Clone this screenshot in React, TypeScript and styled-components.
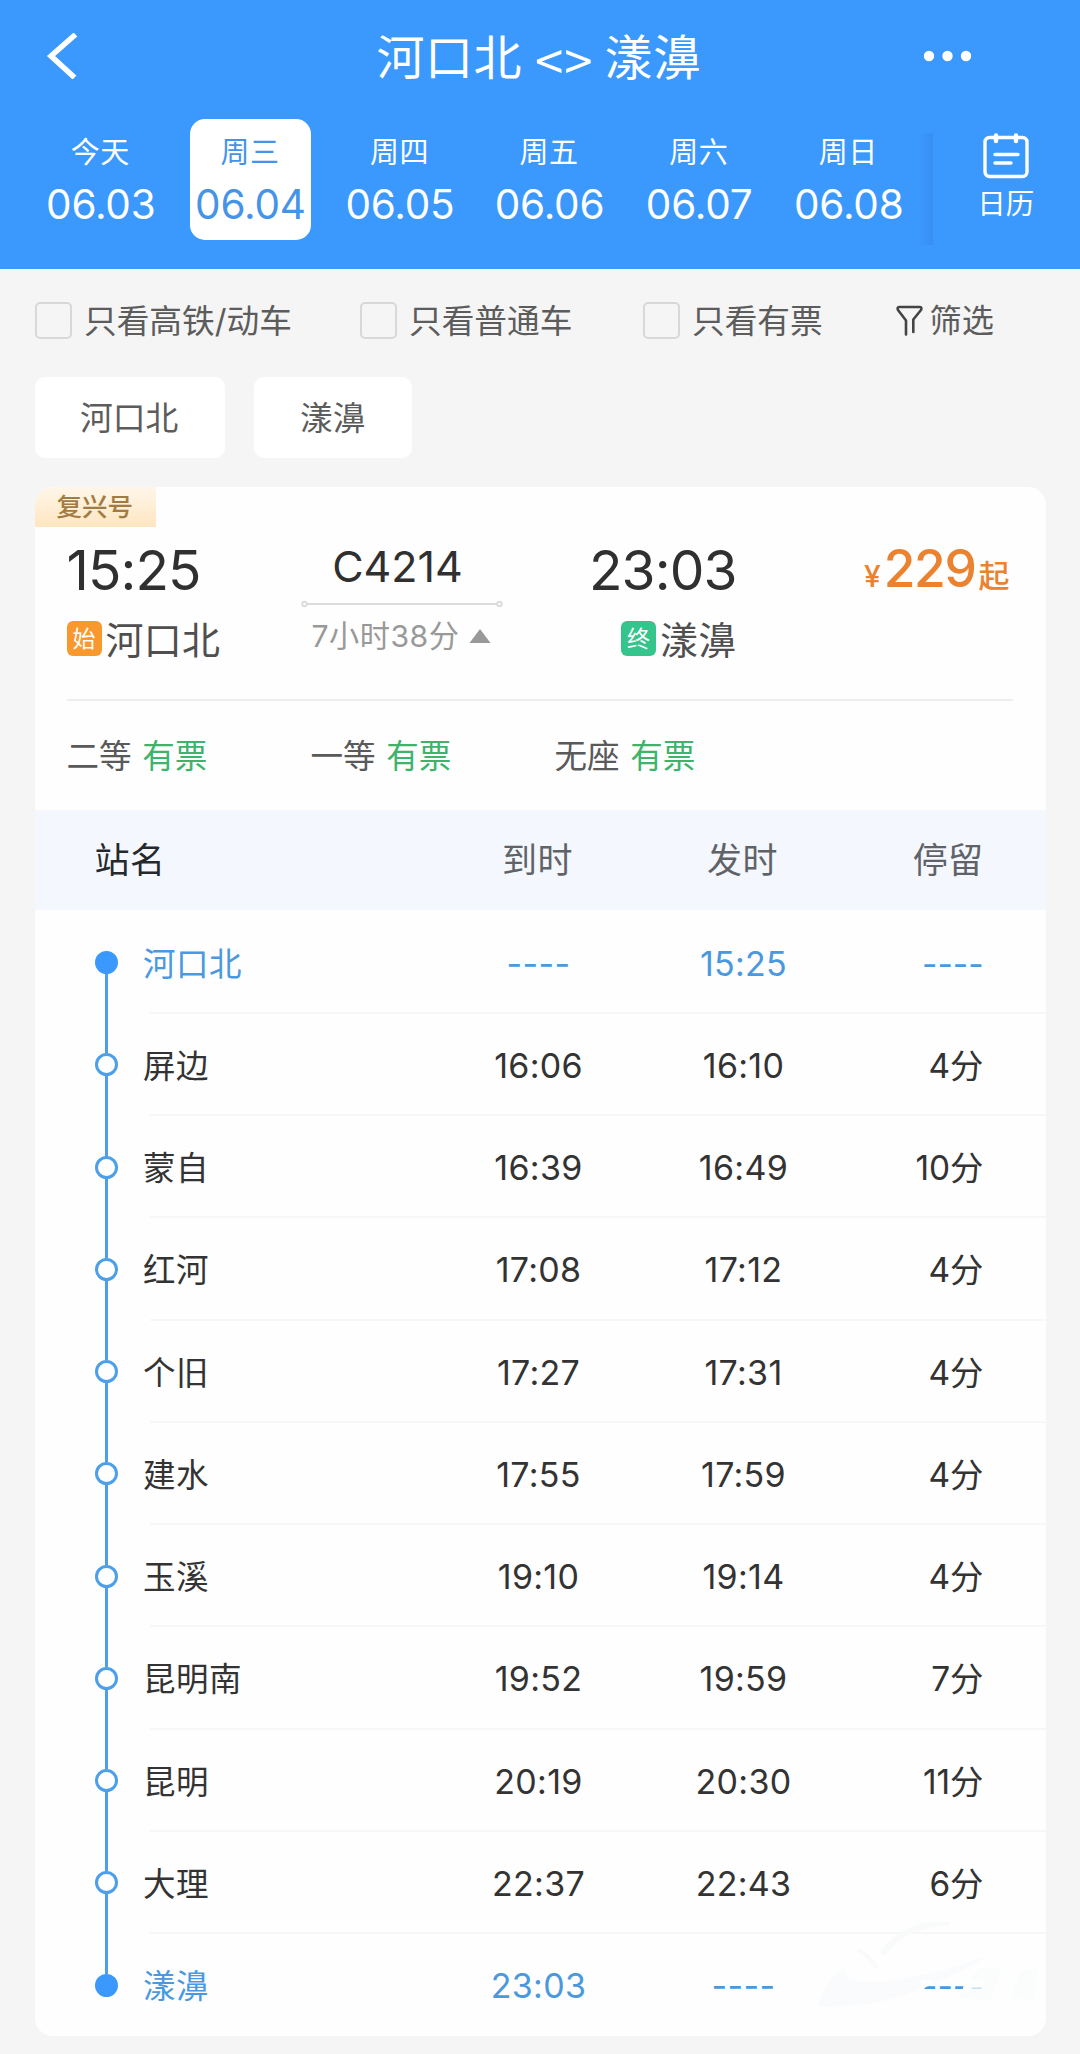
import React from "react";
import styled, { createGlobalStyle, css } from "styled-components";

const BLUE = "#3b98fc";
const LINK = "#4a99de";

const GlobalStyle = createGlobalStyle`
  * { box-sizing: border-box; }
  body {
    margin: 0;
    background: #f5f5f5;
    font-family: Inter, "Noto Sans CJK SC", sans-serif;
    color: #333;
  }
`;

const Page = styled.div`
  width: 1080px;
  height: 2054px;
  overflow: hidden;
  background: #f5f5f5;
`;

/* Header */
const Header = styled.header`
  height: 269px;
  background: ${BLUE};
  color: #fff;
`;

const TitleBar = styled.div`
  height: 119px;
  padding: 0 108px 8px 46px;
  display: grid;
  grid-template-columns: 230px 1fr 170px;
  align-items: center;
`;

const Title = styled.h1`
  margin: 0;
  padding-top: 4px;
  font-size: 48px;
  line-height: 60px;
  font-weight: 400;
  letter-spacing: 0.5px;
  text-align: center;
  white-space: nowrap;
  display: flex;
  justify-content: center;
  gap: 13px;
`;

const Swap = styled.span`
  font-family: "Noto Sans CJK SC", sans-serif;
  font-size: 51px;
  letter-spacing: 1px;
  margin-right: -2px;
`;

const DotsIcon = styled.svg`
  justify-self: end;
`;

const DateBar = styled.div`
  display: flex;
  padding-left: 26px;
`;

const Day = styled.div`
  width: 149.6px;
  display: flex;
  justify-content: center;
`;

const DayTile = styled.div<{ $active?: boolean }>`
  width: 121px;
  height: 121px;
  padding-top: 12px;
  border-radius: 15px;
  display: flex;
  flex-direction: column;
  align-items: center;
  ${(p) => p.$active && css`background: #fff; color: #4594e8;`}
`;

const Weekday = styled.span`
  font-size: 29px;
  line-height: 44px;
  letter-spacing: 0.5px;
  margin-right: 1px;
`;

const DateText = styled.span`
  font-size: 40.5px;
  line-height: 60px;
  letter-spacing: -0.2px;
`;

const DateShade = styled.div`
  width: 13px;
  height: 112px;
  margin: 14px 0 0 -4px;
  background: linear-gradient(to right, rgba(50, 120, 215, 0), rgba(50, 120, 215, 0.28));
`;

const Calendar = styled.div`
  flex: 1;
  padding: 14px 1px 0 0;
  display: flex;
  flex-direction: column;
  align-items: center;
`;

const CalendarLabel = styled.span`
  font-size: 28.5px;
  line-height: 36px;
  margin-top: 7px;
`;

/* Filters */
const Filters = styled.div`
  height: 108px;
  padding: 0 0 5px 34.5px;
  display: flex;
  align-items: center;
`;

const FilterOption = styled.label<{ $width: number }>`
  width: ${(p) => p.$width}px;
  display: flex;
  align-items: center;
  gap: 12.5px;
  font-size: 32.7px;
  line-height: 40px;
  color: #5c5c5c;
  white-space: nowrap;
`;

const Box = styled.span`
  width: 37px;
  height: 37px;
  border: 2.5px solid #d8d8d8;
  border-radius: 5px;
`;

const FilterButton = styled(FilterOption)`
  gap: 7px;
  font-size: 32.2px;
`;

const Chips = styled.div`
  display: flex;
  gap: 29px;
  padding-left: 34.5px;
  height: 110px;
`;

const Chip = styled.div`
  height: 81px;
  padding: 0 47px 0 45.5px;
  border-radius: 10px;
  background: #fff;
  font-size: 32.8px;
  line-height: 82px;
  color: #5c5c5c;
`;

/* Card */
const Card = styled.section`
  position: relative;
  width: 1011px;
  height: 1549px;
  margin-left: 34.5px;
  border-radius: 18px;
  background: #fefefe;
  overflow: hidden;
`;

const TrainType = styled.div`
  width: 121px;
  height: 40px;
  padding-left: 22px;
  background: linear-gradient(#fff6ea, #fee6c0);
  color: #a17c42;
  font-size: 25.5px;
  font-weight: 500;
  line-height: 39px;
`;

const Summary = styled.div`
  height: 174px;
  margin: 0 33px 0 32px;
  border-bottom: 2px solid #eee;
  display: grid;
  grid-template-columns: 234px 202px 234px 1fr;
`;

const Endpoint = styled.div<{ $end?: boolean }>`
  display: flex;
  flex-direction: column;
  align-items: ${(p) => (p.$end ? "flex-end" : "flex-start")};
`;

const Clock = styled.div`
  margin-top: 15px;
  font-size: 55px;
  line-height: 56px;
  letter-spacing: -0.9px;
  color: #303030;
`;

const Station = styled.div`
  display: flex;
  align-items: center;
  gap: 4px;
  margin-top: 20px;
  font-size: 38px;
  line-height: 44px;
  letter-spacing: 0.3px;
  color: #4f4f4f;
`;

const Mark = styled.span<{ $color: string }>`
  width: 35px;
  height: 35px;
  margin-top: -3px;
  border-radius: 6px;
  background: ${(p) => p.$color};
  color: #fff;
  font-size: 23px;
  line-height: 36px;
  letter-spacing: 0;
  text-align: center;
`;

const Trip = styled.div`
  display: flex;
  flex-direction: column;
  align-items: center;
`;

const TrainNo = styled.div`
  margin-top: 14px;
  padding-right: 8px;
  font-size: 43px;
  line-height: 50px;
  color: #303030;
`;

const Track = styled.svg`
  display: block;
  margin-top: 8px;
`;

const Duration = styled.div`
  display: flex;
  align-items: center;
  gap: 10px;
  margin-top: 7px;
  font-size: 30.2px;
  line-height: 40px;
  letter-spacing: 0.5px;
  color: #999;
`;

const Price = styled.div`
  display: flex;
  justify-content: flex-end;
  align-items: baseline;
  padding-right: 3px;
  height: 60px;
  margin-top: 11px;
  color: #ea822f;
  line-height: 60px;
  font-weight: 500;
`;

const Yen = styled.span`
  font-size: 30px;
  margin-right: 3px;
`;

const Amount = styled.span`
  font-size: 51.5px;
  letter-spacing: -1.4px;
`;

const From = styled.span`
  font-size: 31px;
  margin-left: 3px;
`;

const Seats = styled.div`
  height: 109px;
  padding: 1px 0 0 32px;
  display: flex;
  align-items: center;
`;

const Seat = styled.div`
  width: 244px;
  display: flex;
  gap: 10.5px;
  font-size: 32.6px;
  line-height: 40px;
  color: #5a5a5a;
`;

const Available = styled.span`
  color: #3fb36c;
`;

/* Timetable */
const TableHead = styled.div`
  height: 100px;
  padding: 0 62px 0 60px;
  background: #f4f8fe;
  display: grid;
  grid-template-columns: 341px 204px 206px 1fr;
  align-items: center;
  font-size: 35px;
  line-height: 44px;
  letter-spacing: 0.4px;
  color: #5f6368;
`;

const HeadCell = styled.span<{ $align?: string; $strong?: boolean }>`
  text-align: ${(p) => p.$align || "left"};
  ${(p) => p.$strong && css`color: #26292c;`}
`;

const Stops = styled.div`
  padding-top: 1.5px;
`;

const StopRow = styled.div`
  height: 102.25px;
  padding-left: 60px;
  display: flex;
`;

const Rail = styled.div`
  width: 23px;
  display: flex;
  flex-direction: column;
  align-items: center;
`;

const RailLine = styled.div<{ $hidden?: boolean }>`
  flex: 1;
  width: 3px;
  background: ${(p) => (p.$hidden ? "transparent" : "#4c9fe8")};
`;

const RailDot = styled.div<{ $solid: boolean }>`
  width: 23px;
  height: 23px;
  border-radius: 50%;
  border: 3px solid ${(p) => (p.$solid ? BLUE : "#4c9fe8")};
  background: ${(p) => (p.$solid ? BLUE : "#fff")};
`;

const StopBody = styled.div<{ $accent: boolean; $last: boolean }>`
  flex: 1;
  margin-left: 32px;
  padding: 6px 62px 0 0;
  display: grid;
  grid-template-columns: 287px 204px 206px 1fr;
  align-items: center;
  border-bottom: 2px solid ${(p) => (p.$last ? "transparent" : "#f7f7f7")};
  line-height: 44px;
  color: ${(p) => (p.$accent ? LINK : "#333")};
`;

const StopName = styled.span`
  margin-left: -6.5px;
  font-size: 32.5px;
  letter-spacing: 0.5px;
`;

const Time = styled.span`
  padding-bottom: 2px;
  font-size: 34px;
  letter-spacing: 0.3px;
  text-align: center;
`;

const Stay = styled.span`
  padding-bottom: 2px;
  font-size: 33.4px;
  text-align: right;
  white-space: nowrap;
`;

const Watermark = styled.svg`
  position: absolute;
  right: 0;
  bottom: 14px;
`;

const days = [
  ["今天", "06.03"],
  ["周三", "06.04"],
  ["周四", "06.05"],
  ["周五", "06.06"],
  ["周六", "06.07"],
  ["周日", "06.08"],
];

const seats = ["二等", "一等", "无座"];

const stops = [
  ["河口北", "----", "15:25", "----"],
  ["屏边", "16:06", "16:10", "4分"],
  ["蒙自", "16:39", "16:49", "10分"],
  ["红河", "17:08", "17:12", "4分"],
  ["个旧", "17:27", "17:31", "4分"],
  ["建水", "17:55", "17:59", "4分"],
  ["玉溪", "19:10", "19:14", "4分"],
  ["昆明南", "19:52", "19:59", "7分"],
  ["昆明", "20:19", "20:30", "11分"],
  ["大理", "22:37", "22:43", "6分"],
  ["漾濞", "23:03", "----", "----"],
];

function CalendarIcon() {
  return (
    <svg width="46" height="46" viewBox="0 0 46 46" fill="none" stroke="#fff" strokeWidth="3.4" strokeLinecap="round">
      <rect x="2" y="4.5" width="42" height="39" rx="4.5" />
      <path d="M13 2.5 V8 M33 2.5 V8" strokeWidth="4.4" />
      <path d="M12 21.5 H35 M12 30 H28" />
    </svg>
  );
}

export default function App() {
  return (
    <Page>
      <GlobalStyle />
      <Header>
        <TitleBar>
          <svg width="34" height="46" viewBox="0 0 34 46" fill="none">
            <path d="M29.5 1.5 L5 23 L28.5 44.5" stroke="#fff" strokeWidth="5.5" />
          </svg>
          <Title>
            <span>河口北</span>
            <Swap>&lt;&gt;</Swap>
            <span>漾濞</span>
          </Title>
          <DotsIcon width="50" height="12" viewBox="0 0 50 12" fill="#fff">
            <circle cx="7" cy="6" r="5.2" />
            <circle cx="25.5" cy="6" r="5.2" />
            <circle cx="44" cy="6" r="5.2" />
          </DotsIcon>
        </TitleBar>
        <DateBar>
          {days.map(([week, date], i) => (
            <Day key={date}>
              <DayTile $active={i === 1}>
                <Weekday>{week}</Weekday>
                <DateText>{date}</DateText>
              </DayTile>
            </Day>
          ))}
          <DateShade />
          <Calendar>
            <CalendarIcon />
            <CalendarLabel>日历</CalendarLabel>
          </Calendar>
        </DateBar>
      </Header>

      <Filters>
        <FilterOption $width={325}><Box />只看高铁/动车</FilterOption>
        <FilterOption $width={283}><Box />只看普通车</FilterOption>
        <FilterOption $width={253}><Box />只看有票</FilterOption>
        <FilterButton as="div" $width={100}>
          <svg width="27" height="32" viewBox="0 0 27 32" fill="none" stroke="#444" strokeWidth="2.6" strokeLinejoin="round" strokeLinecap="round">
            <path d="M10 29.5 V15.5 L2 5 Q0.8 2 3.5 2 H23.5 Q26.2 2 25 5 L17.3 14.5 V27" />
          </svg>
          筛选
        </FilterButton>
      </Filters>

      <Chips>
        <Chip>河口北</Chip>
        <Chip>漾濞</Chip>
      </Chips>

      <Card>
        <TrainType>复兴号</TrainType>
        <Summary>
          <Endpoint>
            <Clock>15:25</Clock>
            <Station><Mark $color="#f8982d">始</Mark>河口北</Station>
          </Endpoint>
          <Trip>
            <TrainNo>C4214</TrainNo>
            <Track width="202" height="10" viewBox="0 0 202 10" fill="#fff" stroke="#dcdcdc" strokeWidth="2">
              <path d="M6 5 H196" />
              <circle cx="3.5" cy="5" r="2.3" />
              <circle cx="198.5" cy="5" r="2.3" />
            </Track>
            <Duration>
              7小时38分
              <svg width="22" height="14" viewBox="0 0 22 14"><path d="M11 0 L21.5 14 H0.5 Z" fill="#999" /></svg>
            </Duration>
          </Trip>
          <Endpoint $end>
            <Clock>23:03</Clock>
            <Station><Mark $color="#35c48c">终</Mark>漾濞</Station>
          </Endpoint>
          <Price>
            <Yen>¥</Yen>
            <Amount>229</Amount>
            <From>起</From>
          </Price>
        </Summary>
        <Seats>
          {seats.map((s) => (
            <Seat key={s}><span>{s}</span><Available>有票</Available></Seat>
          ))}
        </Seats>

        <TableHead>
          <HeadCell $strong>站名</HeadCell>
          <HeadCell $align="center">到时</HeadCell>
          <HeadCell $align="center">发时</HeadCell>
          <HeadCell $align="right">停留</HeadCell>
        </TableHead>
        <Stops>
          {stops.map(([name, arrive, depart, stay], i) => {
            const first = i === 0;
            const last = i === stops.length - 1;
            return (
              <StopRow key={name}>
                <Rail>
                  <RailLine $hidden={first} />
                  <RailDot $solid={first || last} />
                  <RailLine $hidden={last} />
                </Rail>
                <StopBody $accent={first || last} $last={last}>
                  <StopName>{name}</StopName>
                  <Time>{arrive}</Time>
                  <Time>{depart}</Time>
                  <Stay>{stay}</Stay>
                </StopBody>
              </StopRow>
            );
          })}
        </Stops>
        <Watermark width="234" height="100" viewBox="0 0 234 100" fill="none">
          <path d="M7 82 Q9 66 32 44 L35 55 Q50 64 90 57 Q132 50 178 33 Q120 66 82 76 Q50 86 7 84 Z" fill="#f9fbfc" />
          <path d="M46 28 Q58 34 65 46" stroke="#f9fafa" strokeWidth="4" />
          <path d="M70 32 Q92 2 138 0" stroke="#f9fafa" strokeWidth="6" />
          <path d="M146 76 L158 56 L168 46 H190 L178 78 Z M198 76 L208 50 L226 46 L222 78 Z" fill="#fafcfc" opacity="0.7" />
          <path d="M109 58 H124 L109 68.5 Z M153 58 H173 V65.5 H160 L158 70 H150 Z" fill="#fdfefe" />
        </Watermark>
      </Card>
    </Page>
  );
}
